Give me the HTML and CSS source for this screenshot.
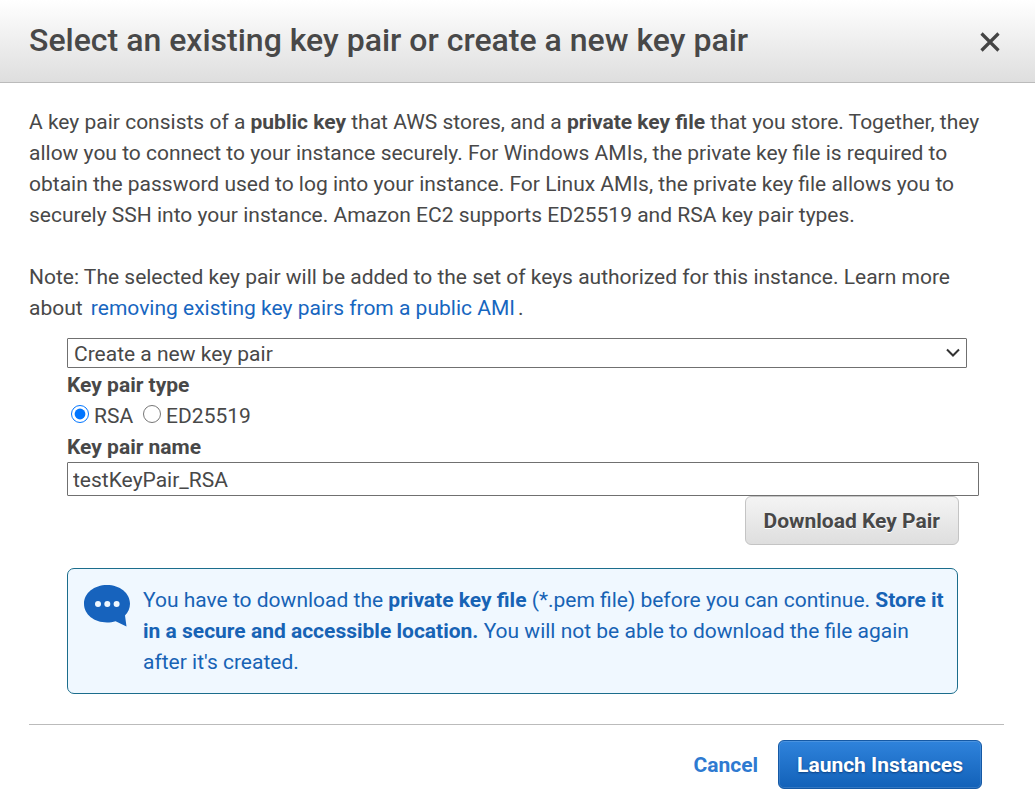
FILE: index.html
```html
<!DOCTYPE html>
<html lang="en">
<head>
<meta charset="utf-8">
<title>Select an existing key pair or create a new key pair</title>
<link rel="stylesheet" href="styles.css">
</head>
<body>
<div class="dialog" role="dialog" aria-labelledby="title">
  <header class="header">
    <h1 id="title">Select an existing key pair or create a new key pair</h1>
    <button class="close" type="button" aria-label="Close">
      <svg width="20" height="20" viewBox="0 0 20 20"><path d="M1.500 1.500L18.500 18.500M18.500 1.500L1.500 18.500" stroke="#444" stroke-width="3.200" fill="none"/></svg>
    </button>
  </header>
  <main class="content">
    <p>A key pair consists of a <b>public key</b> that AWS stores, and a <b>private key file</b> that you store. Together, they allow you to connect to your instance securely. For Windows AMIs, the private key file is required to obtain the password used to log into your instance. For Linux AMIs, the private key file allows you to securely SSH into your instance. Amazon EC2 supports ED25519 and RSA key pair types.</p>
    <p class="note">Note: The selected key pair will be added to the set of keys authorized for this instance. Learn more about <a class="link" href="#">removing existing key pairs from a public AMI</a>.</p>
    <form class="form">
      <div class="picker">
        <select class="select" aria-label="Key pair option"><option>Create a new key pair</option></select>
        <svg class="chevron" width="14" height="10" viewBox="0 0 14 10"><path d="M1 1.500L7 7.500L13 1.500" stroke="#333" stroke-width="2" fill="none"/></svg>
      </div>
      <fieldset class="types">
        <legend>Key pair type</legend>
        <div class="options">
          <label><input type="radio" name="type" checked>RSA</label>
          <label><input type="radio" name="type">ED25519</label>
        </div>
      </fieldset>
      <label class="name-label" for="name">Key pair name</label>
      <input class="name" id="name" type="text" value="testKeyPair_RSA">
      <button class="button download" type="button">Download Key Pair</button>
      <div class="info">
        <svg class="bubble" width="46" height="42" viewBox="0 0 46 42"><path d="M23 0C10.300 0 0 8 0 18.800S10.300 37.500 23 37.500c3 0 6-.4 8.600-1.200L42.500 41.500 41 30.500C44 27.400 46 23.300 46 18.800 46 8 35.700 0 23 0Z" fill="#1763bd"/><g fill="#f0f8ff"><circle cx="14" cy="19" r="3"/><circle cx="23.300" cy="19" r="3"/><circle cx="32.600" cy="19" r="3"/></g></svg>
        <p>You have to download the <b>private key file</b> (*.pem file) before you can continue. <b>Store it in a secure and accessible location.</b> You will not be able to download the file again after it's created.</p>
      </div>
    </form>
    <footer class="footer">
      <button class="cancel" type="button">Cancel</button>
      <button class="button launch" type="button">Launch Instances</button>
    </footer>
  </main>
</div>
</body>
</html>
```

FILE: styles.css
```css
* { box-sizing: border-box; }
body { margin: 0; background: #fff; color: #484848; font: 21px/31px Roboto, sans-serif; }
h1, p { margin: 0; }
b { font-weight: 700; }
button, input, select { font: inherit; color: inherit; }
.header { display: flex; justify-content: space-between; align-items: center; padding: 20px 34px 22px 29px; border-bottom: 1px solid #bbb; background: linear-gradient(#fff, #dedede); }
h1 { font-size: 32px; line-height: 40px; font-weight: 500; }
.close { display: flex; margin-top: 4px; padding: 1px; border: 0; background: none; }
.content { padding: 24px 31px 16px 29px; }
.note { margin-top: 31px; }
.link { margin: 0 3px; color: #1766c0; text-decoration: none; }
.form { display: flex; flex-direction: column; padding: 14px 25px 30px 38px; }
.picker { display: grid; align-items: center; margin-right: 12px; }
.select { grid-area: 1 / 1; height: 30px; padding: 0 30px 0 6px; border: 1px solid #707070; border-radius: 1px; background: #fff; appearance: none; }
.chevron { grid-area: 1 / 1; justify-self: end; margin-right: 7px; pointer-events: none; }
.types { margin: 0; padding: 0; border: 0; }
legend, .name-label { padding: 0; font-weight: 700; line-height: 31px; }
legend { padding-top: 2px; }
.options { display: flex; gap: 6px; }
.options label { display: flex; align-items: center; gap: 5px; }
.options input { width: 18px; height: 18px; margin: 0 0 6px 4px; }
.name-label { line-height: 30px; }
.name { width: 100%; height: 34px; padding: 2px 5px 0; border: 1px solid #707070; border-radius: 1px; }
.button { height: 49px; padding: 2px 18px 0; border: 1px solid #c4c4c4; border-radius: 6px; font-weight: 700; }
.download { align-self: flex-end; margin-right: 20px; background: linear-gradient(#f4f4f4, #dedede); text-shadow: 0 1px #fff; }
.info { display: flex; gap: 13px; margin: 23px 21px 0 0; padding: 16px 12px 15px 16px; border: 1px solid #1b6d8c; border-radius: 7px; background: #f0f8ff; color: #1763b5; }
.bubble { flex: none; }
.footer { display: flex; justify-content: flex-end; gap: 20px; padding: 15px 22px 0 0; border-top: 1px solid #bbb; }
.cancel { padding: 1px 0 0; border: 0; background: none; color: #2e7ad1; font-weight: 700; }
.launch { border-color: #1559a5; background: linear-gradient(#2f83dc, #1261b8); box-shadow: inset 0 0 0 1px #ffffff22; color: #fff; text-shadow: 0 1px 2px #0b3f80; }
```
